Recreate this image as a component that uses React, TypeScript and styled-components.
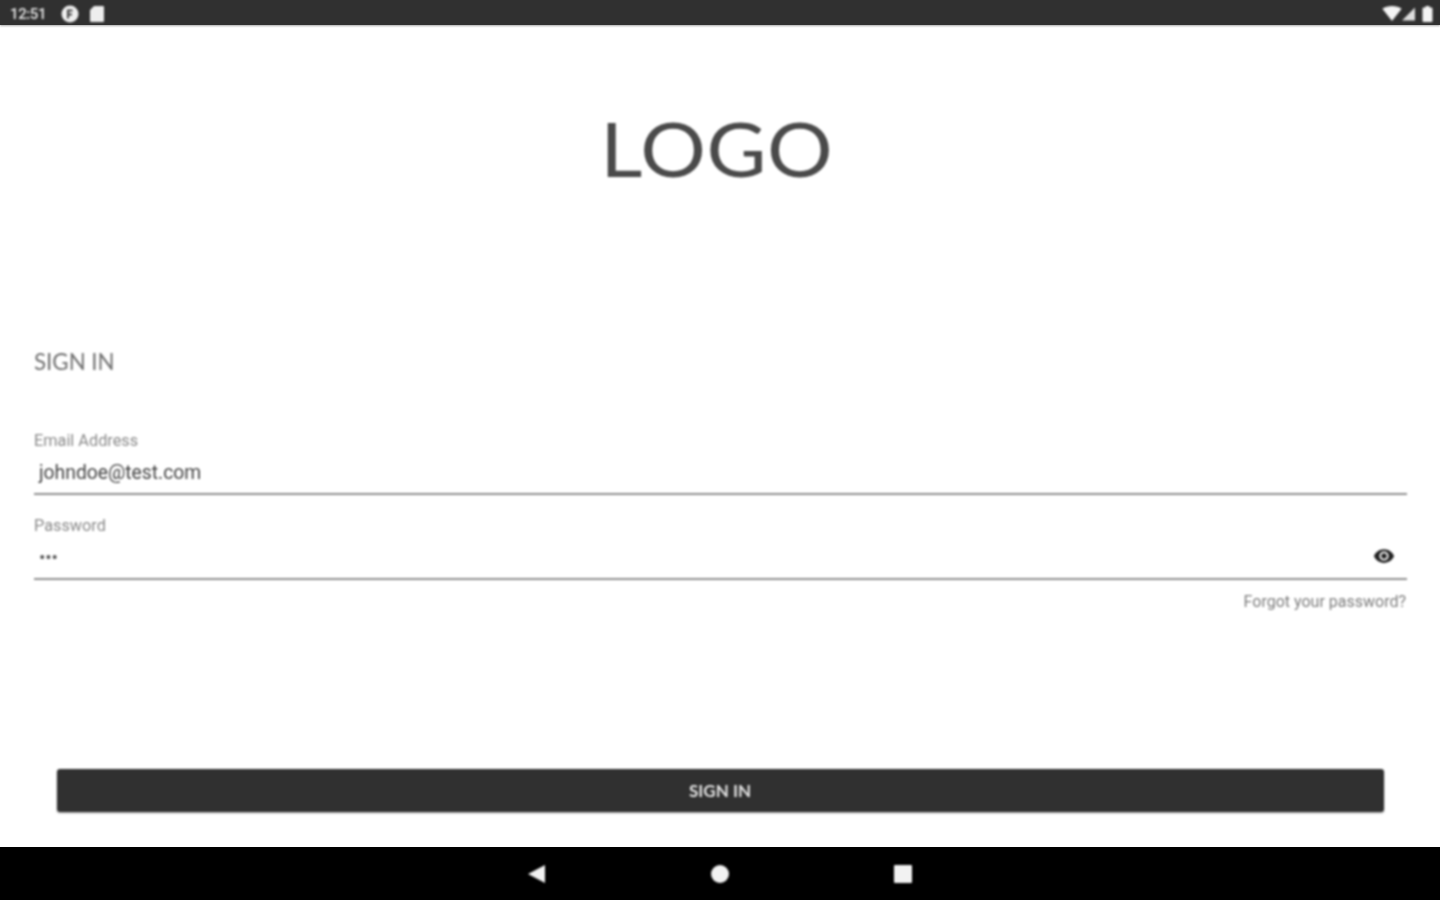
import React from 'react';
import styled, { createGlobalStyle } from 'styled-components';

const GlobalStyle = createGlobalStyle`
  html, body {
    margin: 0;
    padding: 0;
    background: #fff;
    font-family: 'Roboto', 'Liberation Sans', sans-serif;
  }
`;

const Screen = styled.div`
  width: 1440px;
  height: 900px;
  display: flex;
  flex-direction: column;
  overflow: hidden;
  background: #fff;
`;

const StatusBar = styled.div`
  flex: 0 0 25px;
  display: flex;
  align-items: center;
  justify-content: space-between;
  padding: 2px 7px 0 10px;
  box-sizing: border-box;
  background: #303030;
  box-shadow: 0 1px 2px rgba(0, 0, 0, 0.35);
`;

const StatusGroup = styled.div`
  display: flex;
  align-items: center;
  filter: blur(0.8px);
`;

const Clock = styled.span`
  font-size: 15px;
  font-weight: 500;
  letter-spacing: -0.4px;
  color: #e8e8e8;
  margin-right: 15px;
`;

const Content = styled.main`
  flex: 1;
  display: flex;
  flex-direction: column;
  padding: 0 33px 0 34px;
  filter: blur(0.8px);
`;

const Logo = styled.div`
  align-self: center;
  margin: 85px 0 0 -8px;
  height: 76px;
  line-height: 76px;
  font-family: 'Lato', sans-serif;
  font-weight: 400;
  font-size: 76px;
  letter-spacing: 0.5px;
  color: #4a4a4a;
  transform: scaleX(1.08);
`;

const Title = styled.h1`
  margin: 162px 0 0;
  font-family: 'Lato', sans-serif;
  font-weight: 400;
  font-size: 22.3px;
  line-height: 28px;
  color: #6f6f6f;
`;

const Field = styled.div`
  display: flex;
  flex-direction: column;
  border-bottom: 2px solid #8f8f8f;
`;

const EmailField = styled(Field)`
  margin-top: 56px;
  height: 61px;
`;

const PasswordField = styled(Field)`
  margin-top: 22px;
  height: 61px;
`;

const Label = styled.label`
  margin-bottom: 2px;
  font-size: 16.3px;
  line-height: 18px;
  color: #8a8a8a;
`;

const ValueRow = styled.div`
  flex: 1;
  display: flex;
  align-items: center;
  justify-content: space-between;
  padding: 0 12px 0 5px;
`;

const Value = styled.span`
  font-size: 19.3px;
  color: #444;
`;

const Dots = styled.span`
  font-size: 19px;
  letter-spacing: -0.2px;
  color: #555;
`;

const Forgot = styled.a`
  align-self: flex-end;
  margin: 13px 1px 0 0;
  font-size: 16px;
  line-height: 18px;
  color: #7d7d7d;
`;

const SignInButton = styled.button`
  align-self: center;
  width: 1327px;
  height: 43px;
  margin: 158px 0 0 -1px;
  border: none;
  border-radius: 3px;
  background: #303030;
  box-shadow: 0 1px 2px rgba(0, 0, 0, 0.4);
  font-family: 'Lato', sans-serif;
  font-weight: 700;
  font-size: 17px;
  color: #e4e4e4;
`;

const NavBar = styled.nav`
  flex: 0 0 53px;
  display: flex;
  align-items: center;
  justify-content: center;
  gap: 163px;
  background: #000;

  svg {
    filter: blur(0.8px);
  }
`;

const EyeSvg = styled.svg`
  margin-bottom: 4px;
`;

const EyeIcon = () => (
  <EyeSvg width="22" height="22" viewBox="0 0 24 24" fill="#222">
    <path d="M12 4.5C7 4.5 2.73 7.61 1 12c1.73 4.39 6 7.500 11 7.500s9.270-3.110 11-7.500c-1.730-4.390-6-7.500-11-7.500zM12 17a5 5 0 1 1 0-10 5 5 0 0 1 0 10zm0-8a3 3 0 1 0 0 6 3 3 0 0 0 0-6z" />
  </EyeSvg>
);

export default function App() {
  return (
    <Screen>
      <GlobalStyle />
      <StatusBar>
        <StatusGroup>
          <Clock>12:51</Clock>
          <svg width="18" height="18" viewBox="0 0 18 18">
            <circle cx="9" cy="9" r="8.500" fill="#eee" />
            <path d="M6 4.500h5.500v2H8v2h3v2H8v3H6z" fill="#444" />
          </svg>
          <svg width="16" height="18" viewBox="0 0 16 18" style={{ marginLeft: 10 }}>
            <path d="M5 1h9a1 1 0 0 1 1 1v14a1 1 0 0 1-1 1H2a1 1 0 0 1-1-1V5z" fill="#eee" />
          </svg>
        </StatusGroup>
        <StatusGroup>
          <svg width="20" height="15" viewBox="0 0 18 14">
            <path d="M0 2.500C2.500.8 5.500 0 9 0s6.500.8 9 2.500L9 14z" fill="#f4f4f4" />
          </svg>
          <svg width="13" height="14" viewBox="0 0 14 14">
            <path d="M14 0v14H0z" fill="#ddd" />
          </svg>
          <svg width="11" height="16" viewBox="0 0 10 16" style={{ marginLeft: 7 }}>
            <path d="M3 0h4v1.500h2a1 1 0 0 1 1 1V15a1 1 0 0 1-1 1H1a1 1 0 0 1-1-1V2.500a1 1 0 0 1 1-1h2z" fill="#f4f4f4" />
          </svg>
        </StatusGroup>
      </StatusBar>
      <Content>
        <Logo>LOGO</Logo>
        <Title>SIGN IN</Title>
        <EmailField>
          <Label>Email Address</Label>
          <ValueRow>
            <Value>johndoe@test.com</Value>
          </ValueRow>
        </EmailField>
        <PasswordField>
          <Label>Password</Label>
          <ValueRow>
            <Dots>•••</Dots>
            <EyeIcon />
          </ValueRow>
        </PasswordField>
        <Forgot>Forgot your password?</Forgot>
        <SignInButton>SIGN IN</SignInButton>
      </Content>
      <NavBar>
        <svg width="20" height="20" viewBox="0 0 20 20">
          <path d="M18 1v18L1 10z" fill="#f2f2f2" />
        </svg>
        <svg width="20" height="20" viewBox="0 0 20 20">
          <circle cx="10" cy="10" r="9" fill="#f2f2f2" />
        </svg>
        <svg width="20" height="20" viewBox="0 0 20 20">
          <rect x="1" y="1" width="18" height="18" rx="1" fill="#f2f2f2" />
        </svg>
      </NavBar>
    </Screen>
  );
}
